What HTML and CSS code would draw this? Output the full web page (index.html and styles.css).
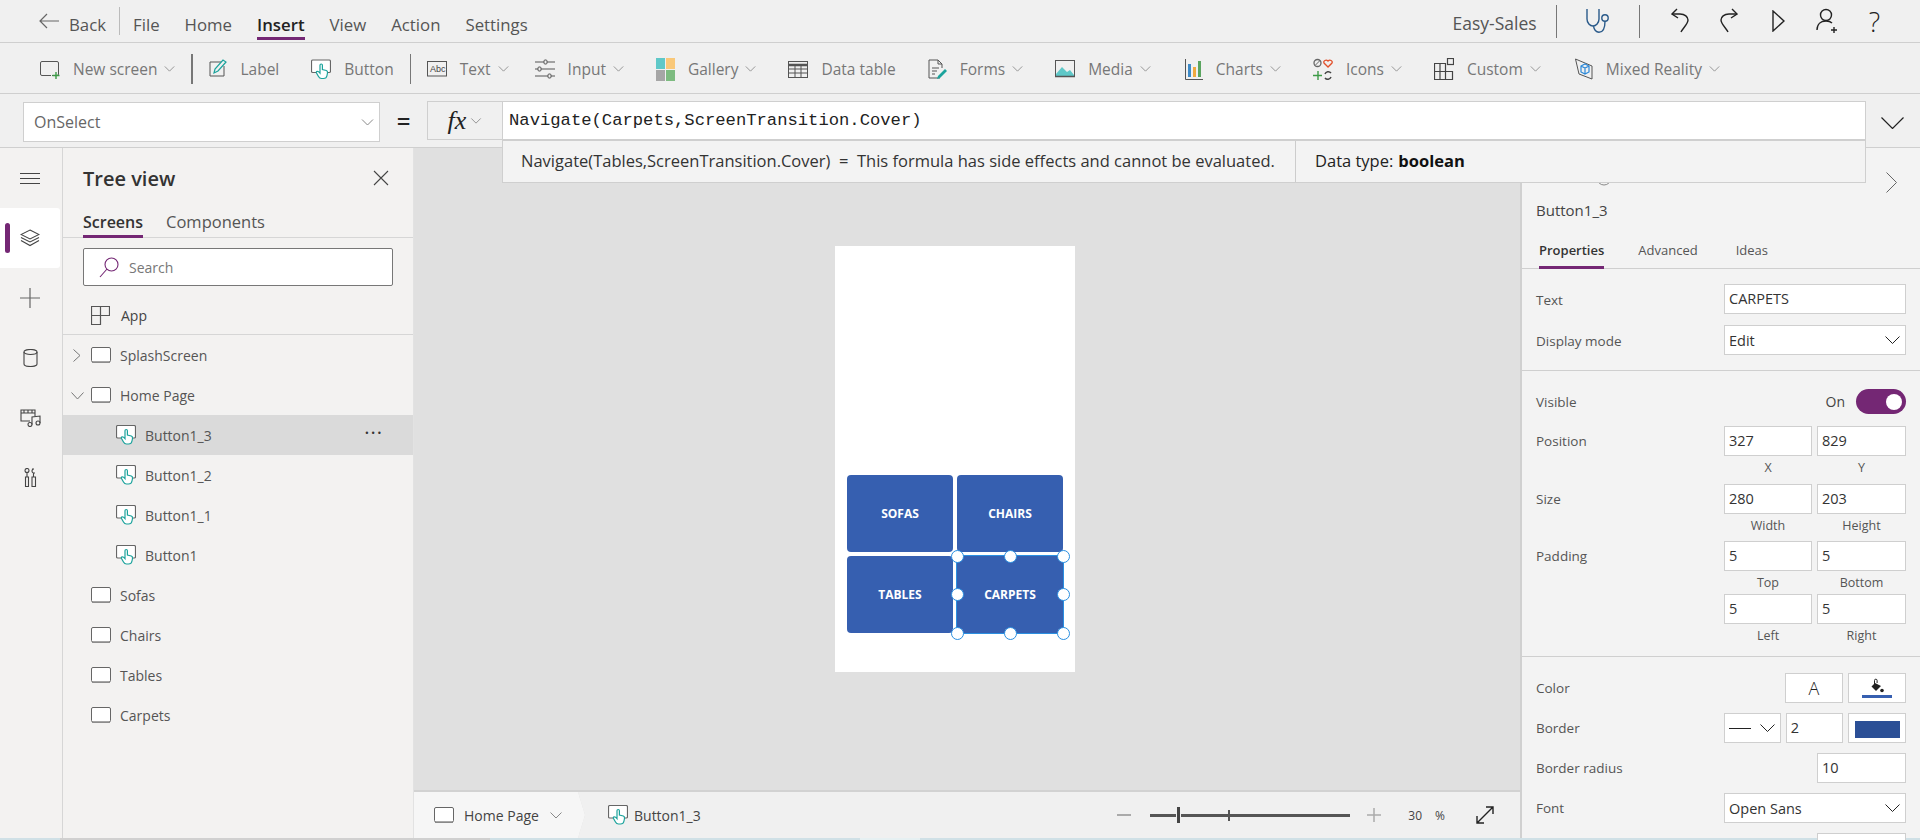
FILE: index.html
```html
<!DOCTYPE html>
<html lang="en">
<head>
  <meta charset="UTF-8">
  <meta name="viewport" content="width=device-width, initial-scale=1.0">
  <title>Easy-Sales - Power Apps</title>
  <link rel="stylesheet" href="styles.css">
</head>
<body>
  <!-- shared icons -->
  <svg class="defs" width="0" height="0" aria-hidden="true">
    <symbol id="i-chev" viewBox="0 0 12 7"><path d="M.5.5 6 6 11.5.5" fill="none" stroke="currentColor"/></symbol>
    <symbol id="i-screen" viewBox="0 0 20 16"><rect x=".5" y=".5" width="19" height="14.5" rx="1.5" fill="#fff" stroke="#666"/><path d="M1 15.3h18" stroke="#888" stroke-width="1.2"/></symbol>
    <symbol id="i-button" viewBox="0 0 20 20">
      <path d="M6 13H1.800Q.5 13 .5 11.700V2Q.5.500 1.800.500H18.200Q19.500.500 19.500 2V11.700Q19.500 13 18.200 13H16" fill="#fff" stroke="#666" stroke-width="1.200"/>
      <path d="M9 13.500V5.800Q9 4.500 10.200 4.500T11.400 5.800V10L15.300 11Q16.800 11.500 16.500 13.500L16 16Q15.500 19 12.500 19H10.500Q8.500 19 7.500 17L5.500 13.500Q5 12 6.200 11.800 7.500 11.700 9 13.500Z" fill="#fff" stroke="#1ba39c" stroke-width="1.200"/>
    </symbol>
  </svg>

  <header class="menubar">
    <div class="menu-left">
      <svg class="back-arrow" width="20" height="16" viewBox="0 0 20 16"><path d="M8 1 1 8l7 7M1 8h19" fill="none" stroke="#666" stroke-width="1.200"/></svg>
      <span class="menu-item back">Back</span>
      <span class="menu-sep"></span>
      <span class="menu-item">File</span>
      <span class="menu-item">Home</span>
      <span class="menu-item active">Insert</span>
      <span class="menu-item">View</span>
      <span class="menu-item">Action</span>
      <span class="menu-item">Settings</span>
    </div>
    <div class="menu-right">
      <span class="app-name">Easy-Sales</span>
      <span class="tall-sep"></span>
      <svg class="act-steth" width="26" height="28" viewBox="0 0 26 28" fill="none" stroke="#2a5a8a" stroke-width="1.400"><path d="M2 2v10c0 4 3 7 6 7s6-3 6-7V2"/><circle cx="20" cy="11" r="3.200"/><path d="M20 14.200c0 5-1 11-6 11-3 0-5-3-5.500-6"/></svg>
      <span class="tall-sep"></span>
      <svg class="act-undo" width="18" height="26" viewBox="0 0 18 26" fill="none" stroke="#222" stroke-width="1.400"><path d="M6 1 1 6l6 4"/><path d="M1 6h8c5 0 8 3 8 6 0 4-5 8-7 12"/></svg>
      <svg class="act-redo" width="18" height="26" viewBox="0 0 18 26" fill="none" stroke="#222" stroke-width="1.400"><path d="M12 1l5 5-6 4"/><path d="M17 6H9C4 6 1 9 1 12c0 4 5 8 7 12"/></svg>
      <svg class="act-play" width="13" height="22" viewBox="0 0 13 22" fill="none" stroke="#222" stroke-width="1.400"><path d="M1 1v20l11-10z"/></svg>
      <svg class="act-user" width="25" height="26" viewBox="0 0 25 26" fill="none" stroke="#222" stroke-width="1.400"><circle cx="10" cy="7" r="5.500"/><path d="M1 22c0-6 4-9 9-9 3 0 5 1 6 2"/><path d="M18 19v6M15 22h6"/></svg>
      <span class="help">?</span>
    </div>
  </header>

  <nav class="ribbon">
    <div class="rb-item">
      <svg width="20" height="20" viewBox="0 0 20 20"><rect x=".5" y="2.500" width="18" height="14" rx="1.500" fill="none" stroke="#555"/><path d="M12 16.500h-1" stroke="#f0f0f0"/><path d="M16 13v7M12.500 16.500h7" stroke="#3c9a46" stroke-width="1.400"/></svg>
      <span>New screen</span><svg class="chev" width="11" height="6"><use href="#i-chev"/></svg>
    </div>
    <span class="rb-sep thick"></span>
    <div class="rb-item">
      <svg width="18" height="20" viewBox="0 0 18 20"><path d="M13 3H1v14h14V7" fill="none" stroke="#555"/><path d="M5 14l1-4 8-9 3 2-8 9z" fill="#f0f0f0" stroke="#1ba39c" stroke-width="1.200"/></svg>
      <span>Label</span>
    </div>
    <div class="rb-item">
      <svg width="20" height="21"><use href="#i-button"/></svg>
      <span>Button</span>
    </div>
    <span class="rb-sep"></span>
    <div class="rb-item tight">
      <svg width="20" height="16" viewBox="0 0 20 16"><rect x=".5" y=".5" width="19" height="14.500" fill="none" stroke="#555"/><text class="abc" x="3" y="11">Abc</text></svg>
      <span>Text</span><svg class="chev" width="11" height="6"><use href="#i-chev"/></svg>
    </div>
    <div class="rb-item">
      <svg width="20" height="20" viewBox="0 0 20 20" fill="#f0f0f0" stroke="#555"><path d="M0 3h20M0 10h20M0 17h20"/><rect x="9" y="1" width="3" height="4" rx="1"/><rect x="3" y="8" width="3" height="4" rx="1"/><rect x="13" y="15" width="3" height="4" rx="1"/></svg>
      <span>Input</span><svg class="chev" width="11" height="6"><use href="#i-chev"/></svg>
    </div>
    <div class="rb-item">
      <svg width="19" height="23" viewBox="0 0 19 23"><rect width="9" height="11" fill="#5fc8c8"/><rect x="10" width="9" height="11" fill="#f9c879"/><rect y="12" width="9" height="11" fill="#a6a6a6"/><rect x="10" y="12" width="9" height="11" fill="#7dbb80"/></svg>
      <span>Gallery</span><svg class="chev" width="11" height="6"><use href="#i-chev"/></svg>
    </div>
    <div class="rb-item">
      <svg width="20" height="17" viewBox="0 0 20 17" fill="none" stroke="#555"><rect x=".5" y=".5" width="19" height="16"/><path d="M0 4h20" stroke-width="2.500"/><path d="M0 8h20M0 12h20M7 4v12M13 4v12"/></svg>
      <span>Data table</span>
    </div>
    <div class="rb-item">
      <svg width="19" height="20" viewBox="0 0 19 20" fill="none"><path d="M12 19H1V1h9l4 4v4M10 1v4h4" stroke="#555"/><path d="M4 9h7M4 12h5M4 15h3" stroke="#555"/><path d="M9 20l1-3 7-7 2 2-7 7z" fill="#1ba39c"/></svg>
      <span>Forms</span><svg class="chev" width="11" height="6"><use href="#i-chev"/></svg>
    </div>
    <div class="rb-item">
      <svg width="20" height="18" viewBox="0 0 20 18"><rect x=".5" y=".5" width="19" height="16" fill="none" stroke="#555"/><path d="M1 14l6-7 5 5 3-2 4 5v1H1z" fill="#5fc8c8"/><path d="M0 16.500h20" stroke="#555" stroke-width="1.500"/></svg>
      <span>Media</span><svg class="chev" width="11" height="6"><use href="#i-chev"/></svg>
    </div>
    <div class="rb-item wide">
      <svg width="18" height="21" viewBox="0 0 18 21"><path d="M.5 0v20.500H18" fill="none" stroke="#555"/><rect x="3" y="5" width="3" height="13" fill="#3d8ac7"/><rect x="8" y="8" width="3" height="10" fill="#f0a93e"/><rect x="13" y="2" width="3" height="16" fill="#5aa45f"/></svg>
      <span>Charts</span><svg class="chev" width="11" height="6"><use href="#i-chev"/></svg>
    </div>
    <div class="rb-item">
      <svg width="20" height="23" viewBox="0 0 20 23" fill="none"><circle cx="4.500" cy="5" r="3.500" stroke="#666" stroke-width="1.300"/><path d="M2 7.500l5-5" stroke="#666"/><path d="M15 9l-4-4c-1-2 2-4 4-2 2-2 5 0 4 2z" stroke="#e2502b" stroke-width="1.300"/><path d="M5 13v9M0 17.500h9" stroke="#3c9a46" stroke-width="1.400"/><path d="M12 16a3.500 3.500 0 0 1 6-1M18 19a3.500 3.500 0 0 1-6 1" stroke="#444" stroke-width="1.500"/></svg>
      <span>Icons</span><svg class="chev" width="11" height="6"><use href="#i-chev"/></svg>
    </div>
    <div class="rb-item">
      <svg width="20" height="23" viewBox="0 0 20 23" fill="none" stroke="#444" stroke-width="1.200"><path d="M.5 5.500h11v16H.5zM.5 13.500h11"/><path d="M11.500 13.500h7v8h-7"/><rect x="13.500" y=".5" width="6" height="6"/><path d="M6 5.500v16"/></svg>
      <span>Custom</span><svg class="chev" width="11" height="6"><use href="#i-chev"/></svg>
    </div>
    <div class="rb-item wide">
      <svg width="18" height="22" viewBox="0 0 18 22" fill="none"><path d="M.5 1 17 8v13L4 16z" stroke="#555"/><path d="M6 8l4-2 4 2v6l-4 2-4-2zM6 8l4 2 4-2M10 10v6" stroke="#2b88d8" stroke-width="1.200"/></svg>
      <span>Mixed Reality</span><svg class="chev" width="11" height="6"><use href="#i-chev"/></svg>
    </div>
  </nav>

  <section class="formula-row">
    <div class="prop-select">
      <span>OnSelect</span><svg class="chev" width="13" height="7"><use href="#i-chev"/></svg>
    </div>
    <span class="equals">=</span>
    <div class="fx-box"><i class="fx">fx</i><svg class="chev" width="12" height="6"><use href="#i-chev"/></svg></div>
    <div class="formula-input">
      Navigate(Carpets,ScreenTransition.Cover)
      <div class="formula-result">
        <span class="result-text">Navigate(Tables,ScreenTransition.Cover)&nbsp; = &nbsp;This formula has side effects and cannot be evaluated.</span>
        <span class="result-type">Data type: <b>boolean</b></span>
      </div>
    </div>
    <svg class="formula-toggle" width="23" height="12" viewBox="0 0 23 12"><path d="M.5.500 11.500 11.500 22.500.500" fill="none" stroke="#222" stroke-width="1.200"/></svg>
  </section>

  <main class="workspace">
    <aside class="rail">
      <div class="rail-btn">
        <svg width="20" height="11" viewBox="0 0 20 11" stroke="#444"><path d="M0 .5h20M0 5.500h20M0 10.500h20"/></svg>
      </div>
      <div class="rail-btn active">
        <svg width="20" height="18" viewBox="0 0 20 18" fill="none" stroke="#444" stroke-width="1.100"><path d="M10 1l9 4.500-9 4.500-9-4.500z"/><path d="M1 8.500l9 4.500 9-4.500M1 11.500l9 5 9-5"/></svg>
      </div>
      <div class="rail-btn">
        <svg width="20" height="20" viewBox="0 0 20 20" stroke="#666" stroke-width="1.200"><path d="M10 0v20M0 10h20"/></svg>
      </div>
      <div class="rail-btn">
        <svg width="15" height="18" viewBox="0 0 15 18" fill="none" stroke="#444" stroke-width="1.100"><ellipse cx="7.500" cy="3" rx="6.500" ry="2.500"/><path d="M1 3v12c0 1.500 3 2.500 6.500 2.500S14 16.500 14 15V3"/></svg>
      </div>
      <div class="rail-btn">
        <svg width="21" height="18" viewBox="0 0 21 18" fill="none" stroke="#444" stroke-width="1.100"><path d="M10 12H1V1h14v6M1 4h14M4 1v3M8 1v3M12 1v3"/><circle cx="10" cy="15.500" r="2"/><circle cx="18" cy="14" r="2"/><path d="M12 15.500V8l8-1v7"/></svg>
      </div>
      <div class="rail-btn">
        <svg width="13" height="20" viewBox="0 0 13 20" fill="none" stroke="#444" stroke-width="1.100"><circle cx="3" cy="2.500" r="2"/><path d="M3 4.500V9M1.500 9h3v9.500h-3zM8 1h1.500M10 1c-1 0-2 1-2 2s1 2 1.500 2H11M9.500 5v4M8 9h3.500v9.500H8z"/></svg>
      </div>
    </aside>

    <aside class="tree">
      <div class="tree-head">
        <h2>Tree view</h2>
        <svg width="16" height="16" viewBox="0 0 16 16" stroke="#444" stroke-width="1.100"><path d="M1 1l14 14M15 1 1 15"/></svg>
      </div>
      <div class="tree-tabs">
        <span class="tree-tab active">Screens</span>
        <span class="tree-tab">Components</span>
      </div>
      <div class="tree-search">
        <svg width="20" height="21" viewBox="0 0 20 21" fill="none" stroke="#742774" stroke-width="1.100"><circle cx="12.500" cy="7.500" r="6.500"/><path d="M8 12 1 20"/></svg>
        <span>Search</span>
      </div>
      <div class="tree-app">
        <svg width="19" height="19" viewBox="0 0 19 19" fill="none" stroke="#555" stroke-width="1.200"><path d="M.5.500h18v9h-9v9h-9zM.5 9.500h9V.5"/></svg>
        <span>App</span>
      </div>
      <ul class="tree-list">
        <li class="tree-row">
          <svg class="tree-toggle" width="8" height="13" viewBox="0 0 8 13"><path d="M.5.500 7 6.500.5 12.500" fill="none" stroke="#777"/></svg>
          <svg width="20" height="16"><use href="#i-screen"/></svg><span>SplashScreen</span>
        </li>
        <li class="tree-row">
          <svg class="tree-toggle open" width="13" height="8" viewBox="0 0 13 8"><path d="M.5.500 6.500 7 12.500.5" fill="none" stroke="#777"/></svg>
          <svg width="20" height="16"><use href="#i-screen"/></svg><span>Home Page</span>
        </li>
        <li class="tree-row child selected">
          <svg width="20" height="20"><use href="#i-button"/></svg><span>Button1_3</span>
          <span class="dots">···</span>
        </li>
        <li class="tree-row child"><svg width="20" height="20"><use href="#i-button"/></svg><span>Button1_2</span></li>
        <li class="tree-row child"><svg width="20" height="20"><use href="#i-button"/></svg><span>Button1_1</span></li>
        <li class="tree-row child"><svg width="20" height="20"><use href="#i-button"/></svg><span>Button1</span></li>
        <li class="tree-row"><svg width="20" height="16"><use href="#i-screen"/></svg><span>Sofas</span></li>
        <li class="tree-row"><svg width="20" height="16"><use href="#i-screen"/></svg><span>Chairs</span></li>
        <li class="tree-row"><svg width="20" height="16"><use href="#i-screen"/></svg><span>Tables</span></li>
        <li class="tree-row"><svg width="20" height="16"><use href="#i-screen"/></svg><span>Carpets</span></li>
      </ul>
    </aside>

    <section class="canvas">
      <div class="stage">
        <div class="phone">
          <div class="phone-btn">SOFAS</div>
          <div class="phone-btn">CHAIRS</div>
          <div class="phone-btn">TABLES</div>
          <div class="phone-btn picked">CARPETS
            <i class="handle tl"></i><i class="handle tc"></i><i class="handle tr"></i>
            <i class="handle ml"></i><i class="handle mr"></i>
            <i class="handle bl"></i><i class="handle bc"></i><i class="handle br"></i>
          </div>
        </div>
      </div>
      <footer class="statusbar">
        <div class="crumb-screen">
          <svg width="20" height="16"><use href="#i-screen"/></svg>
          <span>Home Page</span>
          <svg class="chev" width="14" height="7"><use href="#i-chev"/></svg>
        </div>
        <svg class="crumb-edge" width="8" height="46" viewBox="0 0 8 46"><path d="M.5 0 7.500 23 .5 46" fill="none" stroke="#dcdcdc"/></svg>
        <div class="crumb-ctrl">
          <svg width="20" height="20"><use href="#i-button"/></svg>
          <span>Button1_3</span>
        </div>
        <div class="zoom">
          <span class="zoom-minus"></span>
          <div class="slider"><i class="slider-mark"></i><i class="slider-thumb"></i></div>
          <svg width="14" height="14" viewBox="0 0 14 14" stroke="#aaa" stroke-width="1.500"><path d="M7 0v14M0 7h14"/></svg>
          <span class="zoom-val">30</span><span class="zoom-pct">%</span>
          <svg class="expand" width="20" height="20" viewBox="0 0 20 20" fill="none" stroke="#222" stroke-width="1.400"><path d="M2 18 18 2M11 2h7v7M2 11v7h7"/></svg>
        </div>
      </footer>
    </section>

    <aside class="props">
      <div class="props-top">
        <svg class="peek" width="16" height="16" viewBox="0 0 16 16"><circle cx="8" cy="8" r="7" fill="none" stroke="#888"/></svg>
        <svg class="props-close" width="11" height="21" viewBox="0 0 11 21"><path d="M.5.500 10.500 10.500.5 20.500" fill="none" stroke="#666"/></svg>
      </div>
      <div class="props-title">Button1_3</div>
      <div class="props-tabs">
        <span class="props-tab active">Properties</span>
        <span class="props-tab">Advanced</span>
        <span class="props-tab">Ideas</span>
      </div>

      <div class="props-group first">
        <div class="prop-row"><label>Text</label><div class="input wide">CARPETS</div></div>
        <div class="prop-row"><label>Display mode</label><div class="input wide select">Edit<svg width="15" height="8" viewBox="0 0 15 8"><path d="M.5.500 7.500 7.500 14.500.5" fill="none" stroke="#222"/></svg></div></div>
      </div>

      <div class="props-group second">
        <div class="prop-row short"><label>Visible</label><div class="toggle-wrap"><span>On</span><span class="toggle"><i></i></span></div></div>
        <div class="prop-row pair gap6"><label>Position</label>
          <div class="field"><div class="input">327</div><small>X</small></div>
          <div class="field"><div class="input">829</div><small>Y</small></div>
        </div>
        <div class="prop-row pair gap5"><label>Size</label>
          <div class="field"><div class="input">280</div><small>Width</small></div>
          <div class="field"><div class="input">203</div><small>Height</small></div>
        </div>
        <div class="prop-row pair gap1"><label>Padding</label>
          <div class="field"><div class="input">5</div><small>Top</small></div>
          <div class="field"><div class="input">5</div><small>Bottom</small></div>
        </div>
        <div class="prop-row pair"><label></label>
          <div class="field"><div class="input">5</div><small>Left</small></div>
          <div class="field"><div class="input">5</div><small>Right</small></div>
        </div>
      </div>

      <div class="props-group third">
        <div class="prop-row"><label>Color</label>
          <div class="tools">
            <div class="input swatch"><span class="swatch-a">A</span></div>
            <div class="input swatch">
              <svg width="14" height="15" viewBox="0 0 14 15"><path d="M5 5 1.500 8.500 6 13l5-5z" fill="#222"/><path d="M4.500 6V2.500a1.300 1.300 0 0 1 2.600 0V5" fill="none" stroke="#222"/><circle cx="12" cy="12.500" r="1.800" fill="#222"/></svg>
              <i class="swatch-bar"></i>
            </div>
          </div>
        </div>
        <div class="prop-row"><label>Border</label>
          <div class="tools">
            <div class="input border-style"><i></i><svg width="15" height="8" viewBox="0 0 15 8"><path d="M.5.500 7.500 7.500 14.500.5" fill="none" stroke="#222"/></svg></div>
            <div class="input swatch left">2</div>
            <div class="input swatch"><i class="border-color"></i></div>
          </div>
        </div>
        <div class="prop-row"><label>Border radius</label><div class="input half">10</div></div>
        <div class="prop-row"><label>Font</label><div class="input wide select">Open Sans<svg width="15" height="8" viewBox="0 0 15 8"><path d="M.5.500 7.500 7.500 14.500.5" fill="none" stroke="#222"/></svg></div></div>
        <div class="prop-row"><label></label><div class="input half"></div></div>
      </div>
    </aside>
  </main>
  <div class="taskbar-edge"></div>
</body>
</html>
```

FILE: styles.css
```css
/* Reset */
* {
  margin: 0;
  padding: 0;
  box-sizing: border-box;
  font-family: 'Open Sans', 'Noto Sans', sans-serif;
}

body {
  width: 1920px;
  height: 840px;
  overflow: hidden;
  background: #f0f0f0;
  color: #444;
  font-size: 14px;
}

.defs {
  position: absolute;
}

svg {
  display: block;
  flex: none;
}

.chev {
  color: #888;
}

/* Menu bar */
.menubar {
  height: 43px;
  display: flex;
  justify-content: space-between;
  align-items: center;
  border-bottom: 1px solid #cfcfcf;
  padding: 0 40px 0 39px;
}

.menu-left,
.menu-right {
  display: flex;
  align-items: center;
  height: 100%;
}

.back-arrow {
  margin-right: 10px;
}

.menu-item {
  font-size: 16.800px;
  color: #555;
  margin-right: 25px;
  height: 100%;
  line-height: 49px;
  position: relative;
}

.menu-item.back {
  margin-right: 13px;
}

.menu-item.active {
  color: #222;
  font-weight: 600;
}

.menu-item.active::after {
  content: '';
  position: absolute;
  left: 0;
  right: 0;
  bottom: 2px;
  height: 3px;
  background: #742774;
}

.menu-sep {
  width: 1px;
  height: 28px;
  background: #bbb;
  margin-right: 13px;
}

.app-name {
  font-size: 17.500px;
  color: #555;
  margin-right: 19px;
  padding-top: 4px;
}

.tall-sep {
  width: 1px;
  height: 33px;
  background: #777;
}

.act-steth {
  margin: 0 28px 0 28px;
}

.act-undo {
  margin: 0 31px 0 31px;
}

.act-redo {
  margin-right: 34px;
}

.act-play {
  margin-right: 31px;
}

.act-user {
  margin-right: 28px;
}

.help {
  font-size: 27px;
  color: #222;
  font-weight: 300;
}

/* Ribbon */
.ribbon {
  height: 51px;
  display: flex;
  align-items: center;
  gap: 32px;
  padding: 2px 0 0 40px;
  border-bottom: 1px solid #cfcfcf;
}

.rb-item {
  display: flex;
  align-items: center;
  gap: 13px;
  font-size: 15.500px;
  color: #777;
}

.rb-item.tight {
  margin-right: -6px;
}

.rb-item.wide {
  margin-left: 2px;
}

.rb-item .chev {
  margin-left: -6px;
}

.rb-sep {
  width: 1px;
  height: 30px;
  background: #777;
  margin: 0 -16px;
}

.rb-sep.thick {
  width: 2px;
}

.abc {
  font-size: 9px;
  font-family: 'Liberation Sans', sans-serif;
  fill: #444;
}

/* Formula bar */
.formula-row {
  height: 54px;
  display: flex;
  align-items: flex-start;
  padding: 7px 0 0 23px;
  border-bottom: 1px solid #cfcfcf;
}

.prop-select {
  width: 357px;
  height: 40px;
  margin-top: 1px;
  background: #fff;
  border: 1px solid #cfcfcf;
  display: flex;
  align-items: center;
  justify-content: space-between;
  padding: 0 5px 0 10px;
  font-size: 16px;
  line-height: 34px;
  color: #666;
}

.equals {
  width: 47px;
  text-align: center;
  font-size: 24px;
  font-weight: 600;
  color: #222;
  line-height: 40px;
}

.fx-box {
  width: 75px;
  height: 39px;
  border: 1px solid #cfcfcf;
  border-right: none;
  display: flex;
  align-items: center;
  justify-content: center;
  gap: 4px;
}

.fx {
  font-family: 'Liberation Serif', serif;
  font-size: 26px;
  color: #222;
  line-height: 1;
}

.formula-input {
  width: 1364px;
  height: 39px;
  background: #fff;
  border: 1px solid #cfcfcf;
  padding-left: 6px;
  font-family: 'Liberation Mono', monospace;
  font-size: 17.200px;
  line-height: 37px;
  color: #222;
  position: relative;
}

/* hangs over the canvas and the properties panel */
.formula-result {
  position: absolute;
  top: 38px;
  left: -1px;
  right: -1px;
  height: 43px;
  display: flex;
  align-items: center;
  background: #f3f3f3;
  border: 1px solid #cfcfcf;
  z-index: 5;
  line-height: 1;
  color: #333;
}

.formula-result span,
.formula-result b {
  font-size: 16.500px;
}

.result-text {
  width: 792px;
  height: 100%;
  display: flex;
  align-items: center;
  padding-left: 18px;
  white-space: pre;
}

.result-type {
  height: 100%;
  display: flex;
  align-items: center;
  gap: 5px;
  border-left: 1px solid #ccc;
  padding-left: 19px;
  color: #222;
}

.result-type b {
  color: #111;
}

.formula-toggle {
  margin: 16px 0 0 15px;
}

/* Main area */
.workspace {
  height: 690px;
  display: flex;
}

.rail {
  width: 63px;
  border-right: 1px solid #d6d6d6;
  background: #f3f2f1;
  padding-top: 0;
}

.rail-btn {
  width: 60px;
  height: 60px;
  display: flex;
  align-items: center;
  justify-content: center;
  position: relative;
}

.rail-btn.active {
  background: #fff;
  border-radius: 0 3px 3px 0;
}

.rail-btn.active::before {
  content: '';
  position: absolute;
  left: 5px;
  top: 15px;
  width: 5px;
  height: 30px;
  border-radius: 3px;
  background: #742774;
}

/* Tree view */
.tree {
  width: 351px;
  background: #f3f2f1;
  border-right: 1px solid #e2e2e2;
}

.tree-head {
  height: 60px;
  padding: 0 24px 0 20px;
  display: flex;
  align-items: center;
  justify-content: space-between;
}

.tree-head h2 {
  font-size: 20px;
  font-weight: 600;
  color: #333;
}

.tree-tabs {
  height: 30px;
  display: flex;
  gap: 23px;
  padding-left: 20px;
  border-bottom: 1px solid #d6d6d6;
}

.tree-tab {
  font-size: 16.500px;
  color: #555;
  height: 30px;
  line-height: 28px;
}

.tree-tab.active {
  color: #333;
  font-weight: 600;
  font-size: 16px;
  border-bottom: 3px solid #742774;
}

.tree-search {
  margin: 10px 20px 0;
  height: 38px;
  background: #fff;
  border: 1px solid #777;
  border-radius: 2px;
  display: flex;
  align-items: center;
  gap: 10px;
  padding-left: 15px;
  color: #777;
  font-size: 14px;
}

.tree-app {
  height: 49px;
  display: flex;
  align-items: center;
  gap: 11px;
  padding: 10px 0 0 28px;
  border-bottom: 1px solid #d6d6d6;
}

.tree-list {
  list-style: none;
}

.tree-row {
  height: 40px;
  display: flex;
  align-items: center;
  gap: 9px;
  padding-left: 28px;
  position: relative;
  color: #555;
}

.tree-row.child {
  padding-left: 53px;
}

.tree-row.selected {
  background: #dadada;
}

.tree-toggle {
  position: absolute;
  left: 10px;
  top: 14px;
}

.tree-toggle.open {
  left: 8px;
  top: 17px;
}

.dots {
  position: absolute;
  right: 30px;
  top: 4px;
  font-size: 20px;
  letter-spacing: 1px;
  color: #333;
}

/* Canvas */
.canvas {
  width: 1106px;
  display: flex;
  flex-direction: column;
  background: #e0e0e0;
}

.stage {
  flex: 1;
  padding: 98px 0 0 421px;
}

.phone {
  width: 240px;
  height: 426px;
  background: #fff;
  padding: 229px 12px 0;
  display: grid;
  grid-template-columns: 106px 106px;
  grid-auto-rows: 77px;
  gap: 4px;
}

.phone-btn {
  background: #365fb0;
  border-radius: 4px;
  display: flex;
  align-items: center;
  justify-content: center;
  color: #fff;
  font-size: 12px;
  font-weight: 700;
  position: relative;
}

.phone-btn.picked {
  border-radius: 0;
  outline: 1.500px solid #2b8fe0;
}

.handle {
  position: absolute;
  width: 13px;
  height: 13px;
  margin: -6.500px 0 0 -6.500px;
  border-radius: 50%;
  background: #fff;
  border: 1.500px solid #2b8fe0;
}

.tl, .tc, .tr { top: 0; }
.ml, .mr { top: 50%; }
.bl, .bc, .br { top: 100%; }
.tl, .ml, .bl { left: 0; }
.tc, .bc { left: 50%; }
.tr, .mr, .br { left: 100%; }

/* Status bar */
.statusbar {
  height: 48px;
  border-top: 2px solid #d2d2d2;
  background: #f0f0f0;
  display: flex;
  align-items: center;
  font-size: 14px;
  color: #444;
}

.crumb-screen {
  width: 171px;
  height: 100%;
  background: #f6f6f6;
  display: flex;
  align-items: center;
  gap: 10px;
  padding-left: 20px;
  clip-path: polygon(0 0, 164px 0, 171px 50%, 164px 100%, 0 100%);
}

.crumb-edge {
  margin-left: -8px;
}

.crumb-ctrl {
  display: flex;
  align-items: center;
  gap: 6px;
  margin-left: 23px;
}

.zoom {
  margin-left: auto;
  display: flex;
  align-items: center;
  padding-right: 25px;
}

.zoom-minus {
  width: 14px;
  height: 2px;
  background: #aaa;
}

.slider {
  width: 200px;
  height: 3px;
  background: #555;
  margin: 0 17px 0 19px;
  position: relative;
}

.slider-mark {
  position: absolute;
  left: 78px;
  top: -4px;
  width: 2px;
  height: 11px;
  background: #555;
}

.slider-thumb {
  position: absolute;
  left: 27px;
  top: -7px;
  width: 3px;
  height: 16px;
  background: #444;
  box-shadow: 0 0 0 1px #f0f0f0;
}

.zoom-val {
  margin-left: 27px;
  font-size: 12px;
}

.zoom-pct {
  margin-left: 13px;
  font-size: 12px;
}

.expand {
  margin-left: 30px;
}

/* Properties panel */
.props {
  width: 400px;
  background: #f3f3f3;
  border-left: 2px solid #d0d0d0;
  padding-left: 14px;
}

.props-top {
  height: 50px;
  display: flex;
  justify-content: space-between;
  padding: 24px 23px 0 60px;
}

.peek {
  margin-top: -2px;
}

.props-title {
  height: 24px;
  font-size: 15px;
  line-height: 24px;
  color: #444;
}

.props-tabs {
  height: 47px;
  margin-left: -14px;
  padding: 18px 0 0 17px;
  display: flex;
  gap: 34px;
  border-bottom: 1px solid #cfcfcf;
  font-size: 13px;
  color: #555;
}

.props-tab {
  height: 29px;
  line-height: 20px;
}

.props-tab:last-child {
  margin-left: 4px;
}

.props-tab.active {
  font-weight: 600;
  color: #333;
  border-bottom: 3px solid #742774;
}

.props-group {
  margin-left: -14px;
  padding-left: 14px;
  border-bottom: 1px solid #cfcfcf;
}

.props-group.first {
  padding-top: 15px;
  padding-bottom: 4px;
}

.props-group.first label {
  padding-top: 2px;
}

.props-group.second {
  padding-top: 18px;
  padding-bottom: 10px;
}

.props-group.third {
  padding-top: 16px;
  border-bottom: none;
}

.props-group.third .prop-row {
  margin-bottom: 10px;
}

.prop-row {
  display: grid;
  grid-template-columns: 188px 182px;
  align-items: center;
  margin-bottom: 11px;
}

.prop-row > label {
  font-size: 13.500px;
  color: #555;
}

.prop-row.short {
  height: 25px;
  margin-bottom: 12px;
}

.prop-row.pair {
  grid-template-columns: 183px 88px 89px;
  column-gap: 5px;
  align-items: start;
  margin-bottom: 0;
}

.prop-row.pair > label {
  line-height: 30px;
}

.prop-row.gap6 { margin-bottom: 6px; }
.prop-row.gap5 { margin-bottom: 5px; }
.prop-row.gap1 { margin-bottom: 1px; }

.input {
  height: 30px;
  background: #fff;
  border: 1px solid #cfcfcf;
  padding-left: 4px;
  line-height: 27px;
  font-size: 14.500px;
  color: #333;
}

.input.select {
  display: flex;
  align-items: center;
  justify-content: space-between;
  padding-right: 5px;
}

.input.half {
  width: 89px;
  margin-left: 93px;
}

.field small {
  display: block;
  height: 22px;
  line-height: 23px;
  text-align: center;
  font-size: 12.500px;
  color: #555;
}

.toggle-wrap {
  display: flex;
  justify-content: flex-end;
  align-items: center;
  gap: 11px;
}

.toggle {
  width: 50px;
  height: 25px;
  border-radius: 13px;
  background: #742774;
  display: flex;
  align-items: center;
  justify-content: flex-end;
  padding-right: 4px;
}

.toggle i {
  width: 16px;
  height: 16px;
  border-radius: 50%;
  background: #fff;
}

.tools {
  display: flex;
  justify-content: flex-end;
  gap: 5px;
}

.swatch {
  width: 58px;
  display: flex;
  flex-direction: column;
  align-items: center;
  padding: 4px 0 0;
  position: relative;
}

.swatch.left {
  align-items: flex-start;
  padding: 0 0 0 4px;
}

.swatch-a {
  font-size: 18px;
  font-weight: 300;
  line-height: 20px;
  color: #222;
}

.swatch-bar {
  width: 30px;
  height: 3px;
  background: #365fb0;
  margin-top: 2px;
}

.border-style {
  width: 57px;
  display: flex;
  align-items: center;
  justify-content: space-between;
  padding: 0 5px 0 4px;
}

.border-style i {
  width: 22px;
  height: 1px;
  background: #222;
}

.border-color {
  width: 45px;
  height: 17px;
  margin-top: 3px;
  background: #2b4f96;
}

.taskbar-edge {
  height: 2px;
  background: linear-gradient(90deg, #cfe0e6 60px, #d0d0d0 60px, #d0d0d0 490px, #cfe0e6 490px, #cfe0e6 860px, #e6f0f2 860px, #e6f0f2 920px, #cfe0e6 920px);
}
```
